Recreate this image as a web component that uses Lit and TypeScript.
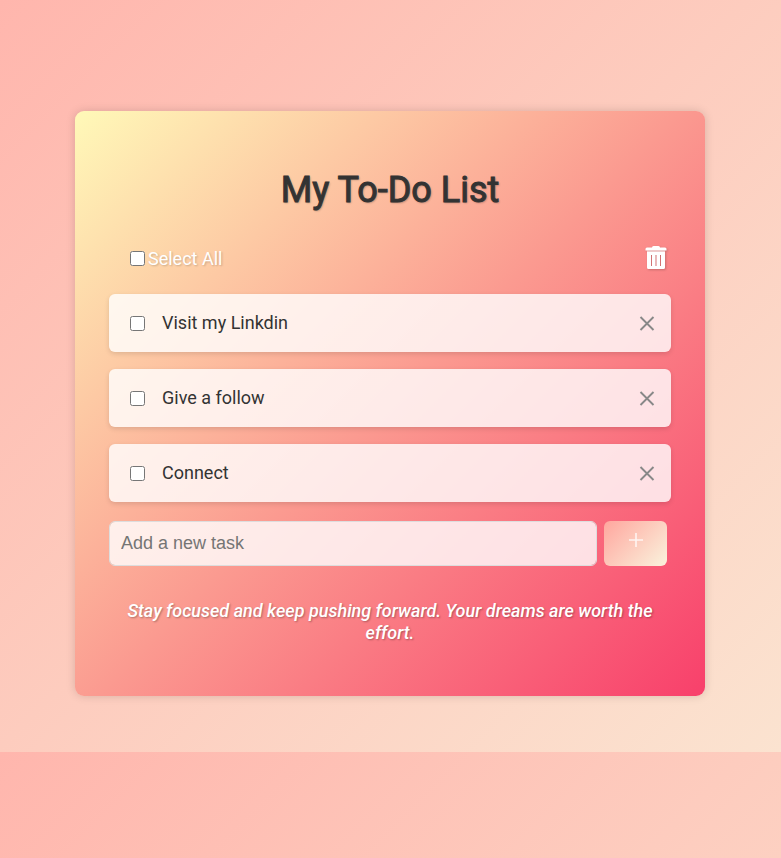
import { LitElement, html, css } from "lit";
import { customElement, state } from "lit/decorators.js";
import { repeat } from "lit/directives/repeat.js";

interface Task {
  id: number;
  text: string;
  done: boolean;
}

@customElement("app-root")
export class AppRoot extends LitElement {
  static styles = css`
    :host {
      display: block;
      box-sizing: border-box;
      min-height: 100vh;
      padding: 111px 17px 56px 16px;
      background: linear-gradient(135deg, #ffb6ad, #fbe3d0) 0 0 / 100% 752px;
      font-family: Roboto, sans-serif;
      font-size: 18px;
      color: #333;
    }
    * {
      box-sizing: border-box;
    }
    .card {
      max-width: 630px;
      margin: 0 auto;
      padding: 57px 34px 52px;
      border-radius: 9px;
      background: linear-gradient(135deg, #fff9b8, #fb9a90 50%, #f8406b);
      box-shadow: 0 0 10px rgba(0, 0, 0, 0.15);
    }
    h1 {
      margin: 0;
      font-size: 36px;
      line-height: 44px;
      font-weight: 400;
      -webkit-text-stroke: 1px #333;
      text-align: center;
      text-shadow: 1px 1px 2px rgba(0, 0, 0, 0.3);
    }
    .toolbar {
      display: flex;
      align-items: center;
      justify-content: space-between;
      height: 28px;
      margin: 32px 4px 22px 21px;
      color: #fff;
      text-shadow: 1px 1px 2px rgba(0, 0, 0, 0.2);
    }
    .all {
      display: flex;
      align-items: center;
      gap: 3px;
    }
    input[type="checkbox"] {
      width: 15px;
      height: 15px;
      margin: 0;
      flex: none;
    }
    button {
      padding: 0;
      border: 0;
      background: none;
      cursor: pointer;
    }
    svg {
      display: block;
    }
    .trash {
      filter: drop-shadow(1px 1px 1px rgba(0, 0, 0, 0.2));
    }
    ul {
      display: grid;
      gap: 17px;
      margin: 0;
      padding: 0;
      list-style: none;
    }
    li {
      display: flex;
      align-items: center;
      justify-content: space-between;
      height: 58px;
      padding: 0 16px 0 21px;
      border-radius: 6px;
      background: rgba(255, 255, 255, 0.8);
      box-shadow: 0 2px 5px rgba(0, 0, 0, 0.12);
    }
    .task {
      display: flex;
      align-items: center;
      gap: 17px;
    }
    .task span {
      padding-bottom: 2px;
    }
    .done {
      text-decoration: line-through;
    }
    form {
      display: flex;
      gap: 7px;
      margin: 19px 4px 0 0;
    }
    .entry {
      flex: 1;
      min-width: 0;
      height: 45px;
      padding: 0 11px;
      border: 1px solid #ddd;
      border-radius: 6px;
      background: rgba(255, 255, 255, 0.8);
      background-clip: padding-box;
      font: 18px "Liberation Sans", sans-serif;
      color: #333;
    }
    .add {
      display: grid;
      justify-items: center;
      align-content: start;
      width: 63px;
      height: 45px;
      padding-top: 12px;
      border-radius: 6px;
      background: linear-gradient(135deg, #ffa69e, #faf3dd);
    }
    .quote {
      margin: 34px 0 0;
      font-style: italic;
      font-weight: 500;
      line-height: 22px;
      text-align: center;
      color: #fff;
      text-shadow: 1px 1px 2px rgba(0, 0, 0, 0.3);
    }
  `;

  @state() private tasks: Task[] = [
    { id: 1, text: "Visit my Linkdin", done: false },
    { id: 2, text: "Give a follow", done: false },
    { id: 3, text: "Connect", done: false },
  ];

  private nextId = 4;

  private toggleAll(e: Event) {
    const done = (e.target as HTMLInputElement).checked;
    this.tasks = this.tasks.map((t) => ({ ...t, done }));
  }

  private toggle(id: number) {
    this.tasks = this.tasks.map((t) => (t.id === id ? { ...t, done: !t.done } : t));
  }

  private remove(id: number) {
    this.tasks = this.tasks.filter((t) => t.id !== id);
  }

  private removeDone() {
    this.tasks = this.tasks.filter((t) => !t.done);
  }

  private add(e: Event) {
    e.preventDefault();
    const input = this.renderRoot.querySelector(".entry") as HTMLInputElement;
    const text = input.value.trim();
    if (!text) return;
    this.tasks = [...this.tasks, { id: this.nextId++, text, done: false }];
    input.value = "";
  }

  render() {
    const allDone = this.tasks.length > 0 && this.tasks.every((t) => t.done);
    return html`
      <main class="card">
        <h1>My To-Do List</h1>
        <div class="toolbar">
          <label class="all">
            <input type="checkbox" .checked=${allDone} @change=${this.toggleAll} />
            Select All
          </label>
          <button class="trash" aria-label="Delete selected" @click=${this.removeDone}>
            <svg width="22" height="24" viewBox="0 0 22 24">
              <path fill="#fff" d="M7 1.500Q7 0 8.500 0H13.500Q15 0 15 1.500H20Q21.500 1.500 21.500 3V4.500H.5V3Q.5 1.500 2 1.500Z" />
              <path
                fill="#fff"
                fill-rule="evenodd"
                d="M2 5.500H20V21.500Q20 23 18.500 23H3.500Q2 23 2 21.500ZM6 9V20H7V9ZM10.500 9V20H11.500V9ZM15 9V20H16V9Z"
              />
              <path fill="#fff" fill-opacity="0.5" d="M2 4.500H20V5.500H2Z" />
            </svg>
          </button>
        </div>
        <ul>
          ${repeat(
            this.tasks,
            (t) => t.id,
            (t) => html`
              <li>
                <label class="task">
                  <input type="checkbox" .checked=${t.done} @change=${() => this.toggle(t.id)} />
                  <span class=${t.done ? "done" : ""}>${t.text}</span>
                </label>
                <button aria-label="Delete ${t.text}" @click=${() => this.remove(t.id)}>
                  <svg width="16" height="16" viewBox="0 0 16 16">
                    <path d="M1.500 2L14.500 15M14.500 2L1.500 15" stroke="#888" stroke-width="1.900" />
                  </svg>
                </button>
              </li>
            `
          )}
        </ul>
        <form @submit=${this.add}>
          <input class="entry" type="text" placeholder="Add a new task" aria-label="Add a new task" />
          <button class="add" type="submit" aria-label="Add">
            <svg width="14" height="14" viewBox="0 0 14 14">
              <path d="M0 7H14M7 0V14" stroke="#fff" stroke-opacity="0.8" stroke-width="1.600" />
            </svg>
          </button>
        </form>
        <p class="quote">Stay focused and keep pushing forward. Your dreams are worth the effort.</p>
      </main>
    `;
  }
}
